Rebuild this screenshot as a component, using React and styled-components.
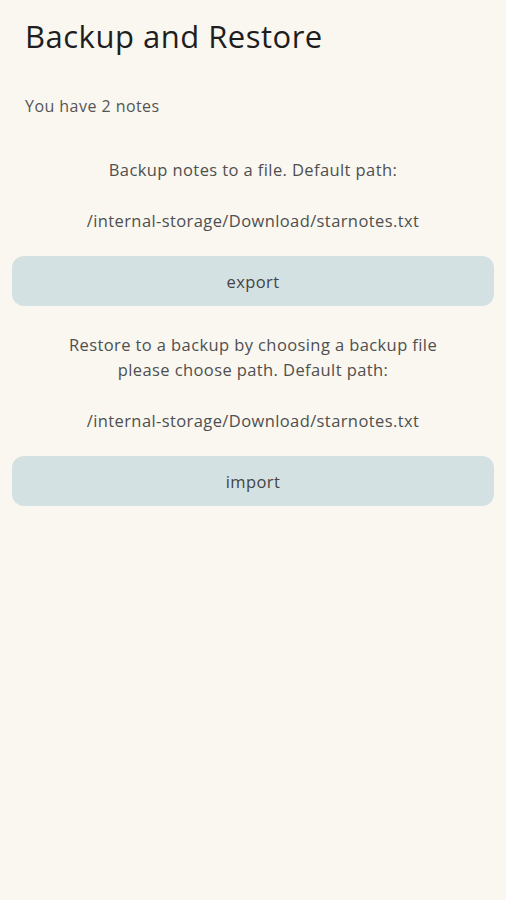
import React from "react";
import styled, { createGlobalStyle } from "styled-components";

const Global = createGlobalStyle`
  html, body { margin: 0; padding: 0; background: #f9f7f0; }
  body { font-family: "Open Sans", "Noto Sans", sans-serif; }
`;

const Page = styled.div`
  min-height: 900px;
  background: #f9f7f0;
  padding: 0 12px;
  box-sizing: border-box;
  color: #444;
`;

const Title = styled.h1`
  margin: 0;
  padding: 17px 0 0 13px;
  font-size: 31px;
  line-height: 38px;
  font-weight: 400;
  letter-spacing: 0.5px;
  color: #1e1e1e;
`;

const Count = styled.p`
  margin: 0;
  padding: 40px 0 0 13px;
  font-size: 16px;
  line-height: 22px;
  letter-spacing: 0.45px;
  color: #555;
`;

const Section = styled.section`
  display: flex;
  flex-direction: column;
  align-items: center;
  padding-top: ${(p) => p.$top}px;
`;

const Text = styled.p`
  margin: 0;
  font-size: 16.5px;
  line-height: 25px;
  letter-spacing: 0.4px;
  text-align: center;
  color: #4f4f4f;
`;

const Path = styled(Text)`
  margin-top: ${(p) => p.$gap}px;
`;

const Button = styled.button`
  margin-top: 23px;
  width: 100%;
  height: 50px;
  border: none;
  border-radius: 12px;
  background: #d4e1e3;
  font-family: inherit;
  font-size: 16.5px;
  letter-spacing: 0.4px;
  color: #444;
  cursor: pointer;
`;

export default function App() {
  return (
    <>
      <Global />
      <Page>
        <Title>Backup and Restore</Title>
        <Count>You have 2 notes</Count>
        <Section $top={40}>
          <Text>Backup notes to a file. Default path:</Text>
          <Path $gap={26}>/internal-storage/Download/starnotes.txt</Path>
          <Button>export</Button>
        </Section>
        <Section $top={26}>
          <Text>
            Restore to a backup by choosing a backup file
            <br />
            please choose path. Default path:
          </Text>
          <Path $gap={26}>/internal-storage/Download/starnotes.txt</Path>
          <Button>import</Button>
        </Section>
      </Page>
    </>
  );
}
